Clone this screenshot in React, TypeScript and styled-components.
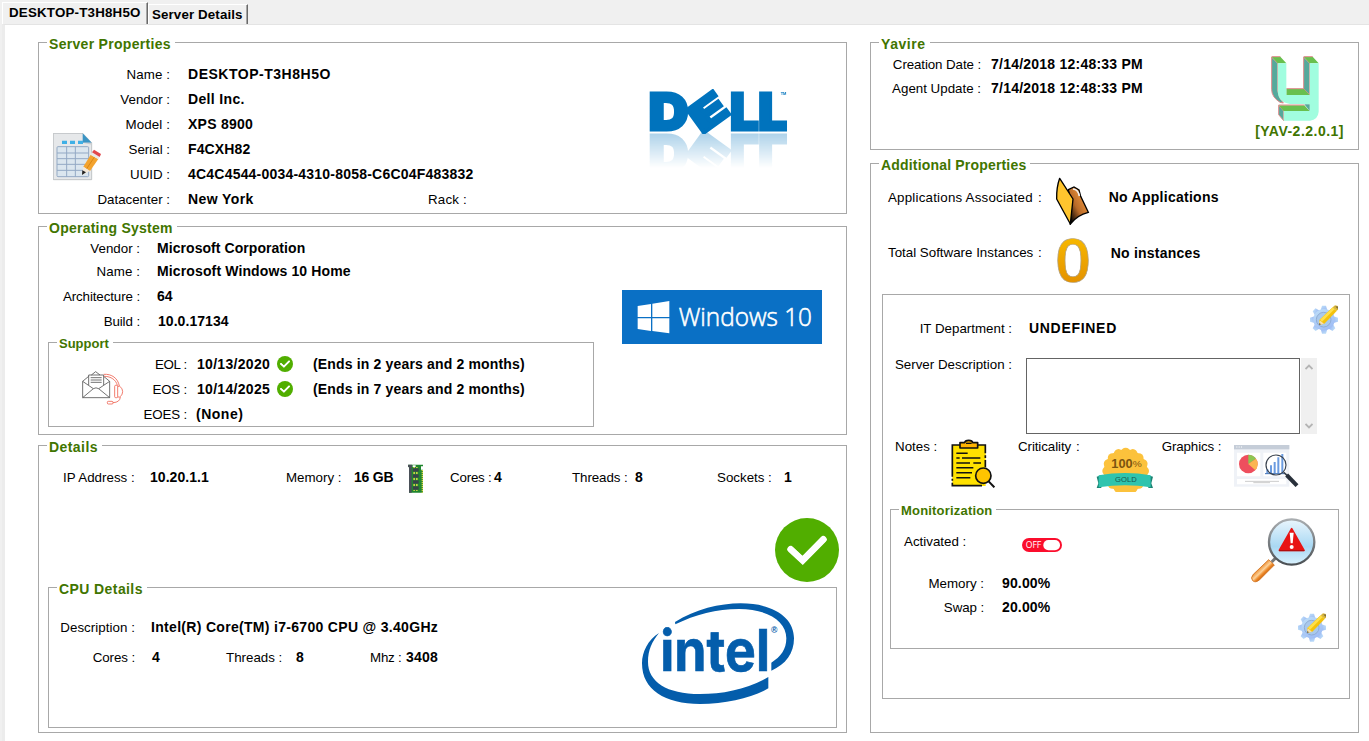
import React from 'react';
import styled, { createGlobalStyle } from 'styled-components';

const GlobalStyle = createGlobalStyle`
  *, *::before, *::after { box-sizing: border-box; }
  body { margin: 0; background: #fff; color: #000; font-family: "Liberation Sans", Arial, sans-serif; overflow: hidden; }
  svg { display: block; }
`;

const Window = styled.div`
  width: 1369px;
  height: 741px;
  display: flex;
  flex-direction: column;
  background: #f0f0f0;
`;

const TabBar = styled.div`
  display: flex;
  align-items: flex-end;
  height: 24px;
  padding-left: 2px;
  background: #f0f0f0;
`;

const Tab = styled.div<{ $active?: boolean; $w: number; $ls: number }>`
  width: ${p => p.$w}px;
  height: ${p => (p.$active ? 22 : 20)}px;
  padding-left: ${p => (p.$active ? 6 : 3)}px;
  border-top: 1px solid #fff;
  border-left: 1px solid #fff;
  border-right: 1px solid #696969;
  box-shadow: inset -1px 0 0 #a5a5a5;
  font-size: 13.33px;
  font-weight: 700;
  line-height: ${p => (p.$active ? 20 : 19)}px;
  letter-spacing: ${p => p.$ls}px;
  white-space: nowrap;
`;

const Page = styled.div`
  flex: 1;
  display: flex;
  gap: 23px;
  margin-left: 2px;
  padding: 17px 0 0 33px;
  border-top: 1px solid #e4e4e4;
  border-left: 3px solid #ececec;
  background: #fff;
`;

const Column = styled.div<{ $w: number; $gap?: number }>`
  display: flex;
  flex-direction: column;
  gap: ${p => p.$gap ?? 0}px;
  width: ${p => p.$w}px;
`;

const Group = styled.section<{ $h: number; $w?: number; $m?: string }>`
  display: flex;
  flex-direction: column;
  flex-shrink: 0;
  width: ${p => (p.$w ? p.$w + 'px' : 'auto')};
  height: ${p => p.$h}px;
  margin: ${p => p.$m ?? '0'};
  border: 1px solid #a8a8a8;
`;

const Legend = styled.h2<{ $ls: number; $size?: number }>`
  align-self: flex-start;
  height: 16px;
  margin: -7px 0 0 8px;
  padding: 0 4px 0 2px;
  background: #fff;
  color: #417500;
  font-size: ${p => p.$size ?? 14}px;
  font-weight: 700;
  line-height: 16px;
  letter-spacing: ${p => p.$ls}px;
  white-space: nowrap;
`;

const Body = styled.div<{ $p?: string; $h?: number }>`
  display: flex;
  align-items: flex-start;
  padding: ${p => p.$p ?? '0'};
  height: ${p => (p.$h ? p.$h + 'px' : 'auto')};
`;

const Fields = styled.div<{ $m?: string }>`
  display: flex;
  flex-direction: column;
  margin: ${p => p.$m ?? '0'};
`;

const Row = styled.div<{ $h?: number; $m?: string }>`
  display: flex;
  align-items: baseline;
  height: ${p => p.$h ?? 25}px;
  margin: ${p => p.$m ?? '0'};
  line-height: 25px;
`;

const Label = styled.span<{ $w?: number; $ls?: number; $end?: boolean; $m?: string }>`
  display: flex;
  flex-shrink: 0;
  justify-content: ${p => (p.$end ? 'flex-end' : 'flex-start')};
  width: ${p => (p.$w ? p.$w + 'px' : 'auto')};
  margin: ${p => p.$m ?? '0'};
  font-size: 13.33px;
  line-height: 25px;
  letter-spacing: ${p => p.$ls ?? 0}px;
  white-space: nowrap;
`;

const Value = styled.strong<{ $w?: number; $ls?: number; $m?: string; $green?: boolean }>`
  display: block;
  flex-shrink: 0;
  width: ${p => (p.$w ? p.$w + 'px' : 'auto')};
  margin: ${p => p.$m ?? '0'};
  color: ${p => (p.$green ? '#417500' : '#000')};
  font-size: 14px;
  font-weight: 700;
  line-height: 25px;
  letter-spacing: ${p => p.$ls ?? 0.2}px;
  white-space: nowrap;
`;

const Art = styled.svg<{ $m?: string }>`
  flex-shrink: 0;
  align-self: flex-start;
  margin: ${p => p.$m ?? '0'};
`;

const Mirrored = styled.div`
  flex-shrink: 0;
  width: 140px;
  height: 45px;
  margin: 37px 57px 0 auto;
  -webkit-box-reflect: below -3px linear-gradient(to bottom, transparent 18%, rgba(0, 0, 0, 0.34) 100%);
`;

const Brand = styled.div`
  display: flex;
  flex-direction: column;
  align-items: center;
  margin: 4px 14px 0 auto;
`;

const DescriptionBox = styled.textarea`
  width: 274px;
  height: 76px;
  margin: 6px 0 0 14px;
  border: 1px solid #646464;
  background: #fff;
  resize: none;
  outline: none;
  overflow: hidden;
`;

const ScrollTrack = styled.div`
  display: flex;
  flex-direction: column;
  justify-content: space-between;
  width: 16px;
  height: 76px;
  margin: 6px 0 0 1px;
  padding: 6px 4px 5px;
  background: #f0f0f0;
`;

const SideIcons = styled.div`
  display: flex;
  flex-direction: column;
  margin-left: auto;
`;

const CheckIcon = ({ size, m }: { size: number; m: string }) => (
  <Art $m={m} width={size} height={size} viewBox="0 0 192 192">
    <circle cx="96" cy="96" r="96" fill="#51ae00" />
    <polyline points="49,95 83,127 144,65" fill="none" stroke="#fff" strokeWidth="17" strokeLinecap="square" />
    <polyline points="47,94 83,127 145,64" fill="none" stroke="#fff" strokeWidth="20" strokeLinecap="round" />
  </Art>
);

const SheetIcon = () => (
  <Art $m="81px 0 0 14px" width="48" height="48" viewBox="159 399 144 144">
    <path d="M160 400H248L275 428V539H160Z" fill="#e6e8ea" stroke="#a9adb0" strokeWidth="2" />
    <path d="M248 400L275 428H248Z" fill="#3a94c4" />
    <path d="M248 428H275V434Z" fill="#c9ccd0" />
    <path d="M186 422h15v10h-15zM210 422h15v10h-15zM234 422h15v10h-15z" fill="#3fb0e6" />
    <rect x="171" y="440" width="95" height="90" rx="3" fill="#dbe6ef" stroke="#93a9c4" strokeWidth="3" />
    <path d="M200 440V530M226 440V530M171 459H266M171 476H266M171 493H266M171 511H266" stroke="#93a9c4" strokeWidth="3" />
    <path d="M272 464L295 477L270 513L250 500Z" fill="#f3a32e" />
    <path d="M284 470L260 506" stroke="#d98613" strokeWidth="3" />
    <path d="M250 500L270 513L246 525Z" fill="#f4e8d8" />
    <path d="M247 511L258 517L246 525Z" fill="#222" />
    <path d="M276 457L299 471L295 478L271 464Z" fill="#e8e8e8" />
    <path d="M282 449L303 462L299 471L276 457Z" fill="#e2474b" />
  </Art>
);

const DellLogo = () => (
  <Mirrored>
    <Art width="140" height="45" viewBox="117 57 420 135">
      <g fill="#0073bd" stroke="#0073bd" strokeWidth="9" fontFamily="Inter, 'Open Sans', sans-serif" fontWeight="900" fontSize="153">
        <text x="116" y="181" textLength="119" lengthAdjust="spacingAndGlyphs">D</text>
        <text x="360" y="181" textLength="86" lengthAdjust="spacingAndGlyphs">L</text>
        <text x="445" y="181" textLength="86" lengthAdjust="spacingAndGlyphs">L</text>
        <g transform="translate(296 125) rotate(-36)">
          <text x="-56" y="44" fontSize="121" textLength="108" lengthAdjust="spacingAndGlyphs">E</text>
        </g>
      </g>
      <text x="512" y="76" fontSize="12" fontWeight="700" fill="#0073bd" fontFamily="Liberation Sans, sans-serif">TM</text>
    </Art>
  </Mirrored>
);

const WindowsLogo = () => (
  <Art $m="54px 24px 0 auto" width="200" height="54" viewBox="66 60 600 162">
    <rect x="66" y="60" width="600" height="162" fill="#0a70c5" />
    <path d="M113 108L153 102V141H113ZM157 101L208 93V141H157ZM113 145H153V183L113 177ZM157 145H208V190L157 183Z" fill="#fff" />
    <text x="236" y="169" fill="#fff" stroke="#fff" strokeWidth="1.8" fontFamily="'Open Sans', 'Noto Sans', sans-serif" fontWeight="300" fontSize="79" textLength="400" lengthAdjust="spacingAndGlyphs">Windows 10</text>
  </Art>
);

const SupportIcon = () => (
  <Art $m="19px 0 0 33px" width="42" height="35" viewBox="156 468 126 105" fill="none">
    <g stroke="#555" strokeWidth="2.5">
      <path d="M158 499V548H239V499M158 499L176 484M239 499L221 484M158 548L190 521Q198 516 206 521L239 548M158 499L190 521M239 499L206 521" />
      <path d="M176 510V480H221V510M184 480L197 470L210 480M182 488H215M182 495H215M182 502H215" />
    </g>
    <g stroke="#ee6352" strokeWidth="2.5">
      <path d="M221 478C245 476 264 490 268 513M223 484C243 484 258 495 262 511" />
      <rect x="254" y="511" width="9" height="37" rx="3" />
      <path d="M263 514H269Q278 519 278 530Q278 541 269 546H263M271 546Q270 562 249 563" />
      <rect x="232" y="559" width="17" height="8" rx="3" />
    </g>
  </Art>
);

const RamIcon = () => (
  <Art $m="-1px 0 0 0" width="16" height="29" viewBox="1134 100 48 87">
    <path d="M1135 102H1179V186H1137V110H1135Z" fill="#20862f" />
    <path d="M1134 102H1146V109H1134ZM1137 102H1145V186H1137Z" fill="#4a5058" />
    <path d="M1148 104h9v5h-9zM1173 107h7v10h-7z" fill="#fff" />
    {[109, 127, 145, 163].map(y => (
      <g key={y}>
        <path d={`M1150 ${y + 2}h16M1150 ${y + 16}h16`} stroke="#e3dc4b" strokeWidth="3" strokeDasharray="5 3" />
        <rect x="1149" y={y + 4} width="17" height="10" fill="#39424a" />
      </g>
    ))}
    <path d="M1177 118V186" stroke="#dfd84a" strokeWidth="4" strokeDasharray="4 2" />
  </Art>
);

const IntelLogo = () => (
  <Art $m="6px 40px 0 auto" width="154" height="101" viewBox="66 279 462 303" fill="#045dab">
    <path d="M117 369C84 390 66 425 66 460C66 540 135 582 240 582C320 581 400 562 445 535V501C385 537 310 552 240 552C140 552 84 515 84 455C84 420 96 395 117 369Z" />
    <path d="M165 336C225 298 300 280 362 280C460 280 522 322 522 385C522 430 497 464 454 482V458C482 441 499 418 499 385C499 332 440 297 357 297C290 297 225 314 166 343Z" />
    <text x="121" y="482" stroke="#045dab" strokeWidth="2" fontFamily="Inter, 'Open Sans', sans-serif" fontWeight="700" fontSize="172" textLength="329" lengthAdjust="spacingAndGlyphs">intel</text>
    <text x="453" y="369" fontFamily="Liberation Sans, sans-serif" fontWeight="700" fontSize="26">®</text>
  </Art>
);

const YavireLogo = () => (
  <Art $m="0 0 0 16px" width="48" height="65" viewBox="1215 77 144 195">
    <path d="M1217 80L1235 99V180Q1238 204 1252 218L1242 216Q1217 200 1217 178Z" fill="#55a99c" stroke="#e08a8c" strokeWidth="3" />
    <path d="M1313 80L1331 99V194L1313 175Z" fill="#55a99c" stroke="#e08a8c" strokeWidth="3" />
    <path d="M1238 225L1253 242V271L1238 253Z" fill="#55a99c" stroke="#e08a8c" strokeWidth="3" />
    <path d="M1217 79H1243L1261 99H1235ZM1313 79H1340L1358 99H1331ZM1261 175H1313L1331 194H1261ZM1238 225H1315L1331 242H1253Z" fill="#68c04e" />
    <path d="M1217 79H1243M1313 79H1340M1261 175H1313M1238 224H1315" stroke="#e08a8c" strokeWidth="3" />
    <path d="M1235 99H1261V194H1331V99H1358V244Q1356 268 1332 271H1253V242H1331V221H1272Q1235 216 1235 180Z" fill="#a1fddf" />
    <path d="M1315 222H1331V242Z" fill="#55a99c" />
  </Art>
);

const FolderIcon = () => (
  <Art $m="4px 0 0 13px" width="35" height="48" viewBox="558 66 105 144">
    <defs>
      <linearGradient id="folderBack" x1="0.7" y1="0.3" x2="0.1" y2="0.9">
        <stop offset="0" stopColor="#e08a38" />
        <stop offset="0.45" stopColor="#b86a28" />
        <stop offset="1" stopColor="#000" />
      </linearGradient>
    </defs>
    <path d="M598 104L615 96L630 105L635 124L658 172Q625 180 604 207L606 140Z" fill="url(#folderBack)" stroke="#000" strokeWidth="4" />
    <path d="M612 102Q628 104 631 123" fill="none" stroke="#f2f2f2" strokeWidth="5" />
    <path d="M572 70L612 132L604 207L563 132Q562 98 572 70Z" fill="#ffc52e" stroke="#000" strokeWidth="4" strokeLinejoin="round" />
  </Art>
);

const ZeroIcon = () => (
  <Art $m="1px 0 0 14px" width="34" height="48" viewBox="561 243 102 144">
    <defs>
      <linearGradient id="zeroFill" x1="0" y1="0" x2="0" y2="1">
        <stop offset="0.1" stopColor="#fcc200" />
        <stop offset="0.9" stopColor="#e08a00" />
      </linearGradient>
    </defs>
    <text x="558" y="381" fontFamily="'Open Sans', sans-serif" fontWeight="600" fontSize="181" textLength="108" lengthAdjust="spacingAndGlyphs" fill="url(#zeroFill)" stroke="#b0a080" strokeWidth="2">0</text>
  </Art>
);

const GearPencil = ({ m }: { m: string }) => (
  <Art $m={m} width="28" height="29" viewBox="0 0 84 87">
    <defs>
      <linearGradient id="gearFill" x1="0" y1="0" x2="0.6" y2="1">
        <stop offset="0" stopColor="#bfe0f8" />
        <stop offset="1" stopColor="#9fbdf5" />
      </linearGradient>
    </defs>
    <g fill="url(#gearFill)">
      {[0, 45, 90, 135, 180, 225, 270, 315].map(a => (
        <path key={a} d="M32 16L36 2H48L52 16Z" transform={`rotate(${a} 42 44)`} />
      ))}
      <circle cx="42" cy="44" r="32" />
    </g>
    <circle cx="41" cy="44" r="22" fill="#a9c9ec" stroke="#8aa6cf" strokeWidth="2.5" />
    <path d="M28 45L68 7L80 18L43 56L27 60Z" fill="#f4c20c" />
    <path d="M30 44L69 7L74 12L36 50Z" fill="#ffe04a" />
    <path d="M29 46L42 56L27 60Z" fill="#f6dfae" />
    <path d="M28 54L33 58L27 60Z" fill="#555" />
    <path d="M68 7L75 1L84 3L85 12L80 18Z" fill="#d9b63a" />
    <path d="M76 4L84 5L83 12Z" fill="#6d6040" />
  </Art>
);

const NotesIcon = () => (
  <Art $m="5px 0 0 15px" width="44" height="50" viewBox="213 27 132 150">
    <path d="M217 45H317V168H217Z" fill="#ffe100" />
    <path d="M240 45H217V140M217 146V152M217 158V167H306M294 45H316V70M316 76V84M316 90V112" fill="none" stroke="#111" strokeWidth="5" />
    <path d="M240 54V38H254Q255 31 266 31Q277 31 278 38H293V54Z" fill="#ffb400" stroke="#111" strokeWidth="5" strokeLinejoin="round" />
    <path d="M258 40H275" stroke="#111" strokeWidth="4" />
    <path d="M229 70H263M229 84H239M246 84H301M229 99H270M280 99H303M229 113H280M229 128H276M229 143H271" stroke="#111" strokeWidth="4.5" />
    <circle cx="310" cy="137" r="23" fill="#ffc400" stroke="#111" strokeWidth="5" />
    <path d="M326 154L343 172" stroke="#111" strokeWidth="6" />
  </Art>
);

const BadgeIcon = () => (
  <Art $m="13px 0 0 16px" width="57" height="45" viewBox="648 51 171 135">
    <g fill="#fcc23c">
      <circle cx="737" cy="123" r="65" />
      {Array.from({ length: 16 }, (_, i) => (
        <circle key={i} cx="737" cy="67" r="14" transform={`rotate(${i * 22.5} 737 123)`} />
      ))}
    </g>
    <path d="M650 140L664 136V174H650L655 160ZM819 140L805 136V174H819L814 160Z" fill="#1c8272" />
    <path d="M656 136Q736 122 812 136V172Q736 160 656 172Z" fill="#2fc4ae" />
    <text x="694" y="114" fontFamily="Liberation Sans, sans-serif" fontWeight="700" fontSize="36" fill="#7b5410" textLength="64" lengthAdjust="spacingAndGlyphs">100</text>
    <text x="758" y="112" fontFamily="Liberation Sans, sans-serif" fontSize="26" fill="#7b5410" textLength="27" lengthAdjust="spacingAndGlyphs">%</text>
    <text x="705" y="155" fontFamily="Liberation Sans, sans-serif" fontSize="20" fill="#17564d" textLength="65" lengthAdjust="spacingAndGlyphs">GOLD</text>
  </Art>
);

const GraphicsIcon = () => (
  <Art $m="10px 0 0 11px" width="65" height="43" viewBox="1062 42 195 129">
    <rect x="1062" y="45" width="166" height="125" fill="#eff2f7" />
    <rect x="1062" y="45" width="166" height="13" fill="#c5cdd8" />
    <path d="M1069 51H1086" stroke="#fff" strokeWidth="3" strokeDasharray="3 4" />
    <path d="M1071 68H1141V139H1071ZM1150 68H1219V139H1150ZM1071 147H1219V163H1071Z" fill="#fff" />
    <path d="M1095 154H1197M1120 158H1170" stroke="#ccc" strokeWidth="3" />
    <circle cx="1105" cy="102" r="28" fill="#ee4f5e" />
    <path d="M1105 102V74A28 28 0 0 1 1128 86Z" fill="#8dc653" />
    <path d="M1105 102L1128 86A28 28 0 0 1 1126 121Z" fill="#fbb652" />
    <path d="M1162 130V118M1173 130V106M1184 130V96M1195 130V82M1207 130V72" stroke="#6a9be0" strokeWidth="6" />
    <path d="M1155 131H1213" stroke="#3d6fb5" strokeWidth="3" />
    <circle cx="1188" cy="105" r="30" fill="none" stroke="#39424e" strokeWidth="3.5" />
    <path d="M1211 127L1222 137" stroke="#39424e" strokeWidth="5" />
    <path d="M1220 135L1251 167" stroke="#28303a" strokeWidth="12" />
  </Art>
);

const OffSwitch = () => (
  <Art $m="9px 0 0 57px" width="40" height="14" viewBox="0 0 120 42">
    <rect width="120" height="42" rx="21" fill="#fb0d2c" />
    <rect x="64" y="6" width="50" height="31" rx="15" fill="#fff" />
    <text x="11" y="30" fontFamily="'Open Sans', sans-serif" fontSize="25" fill="#fff" textLength="47" lengthAdjust="spacingAndGlyphs">OFF</text>
  </Art>
);

const AlertLens = () => (
  <Art $m="-1px 22px 0 0" width="65" height="65" viewBox="1114 54 195 195">
    <defs>
      <linearGradient id="lensGlass" x1="0" y1="0" x2="0" y2="1">
        <stop offset="0" stopColor="#eaf6fd" />
        <stop offset="0.6" stopColor="#a9d8f3" />
        <stop offset="1" stopColor="#d9f1fd" />
      </linearGradient>
      <linearGradient id="lensRim" x1="0" y1="0" x2="0" y2="1">
        <stop offset="0" stopColor="#a9adb0" />
        <stop offset="1" stopColor="#4b5054" />
      </linearGradient>
      <linearGradient id="handle" x1="0.35" y1="0.35" x2="0.65" y2="0.65">
        <stop offset="0" stopColor="#ee8a2a" />
        <stop offset="0.45" stopColor="#fcd29a" />
        <stop offset="0.7" stopColor="#ee8a2a" />
        <stop offset="1" stopColor="#c85f0c" />
      </linearGradient>
    </defs>
    <path d="M1192 170L1176 186" stroke="#777" strokeWidth="9" />
    <path d="M1167 179L1184 195L1140 239Q1128 250 1119 242Q1111 234 1121 223Z" fill="url(#handle)" stroke="#d0701a" strokeWidth="2.5" />
    <circle cx="1236" cy="126" r="68" fill="url(#lensGlass)" stroke="url(#lensRim)" strokeWidth="7" />
    <path d="M1236 86L1273 151H1199Z" fill="#e81414" stroke="#e81414" strokeWidth="5" strokeLinejoin="round" />
    <path d="M1198 152H1274" stroke="#a80d0d" strokeWidth="3" />
    <path d="M1230 98H1242L1239 130H1233Z" fill="#fff" />
    <circle cx="1236" cy="141" r="6" fill="#fff" />
  </Art>
);

const Chevron = ({ down }: { down?: boolean }) => (
  <Art width="8" height="6" viewBox="0 0 8 6">
    <path d={down ? 'M0.5 1L4 4.5L7.5 1' : 'M0.5 5L4 1.5L7.5 5'} fill="none" stroke="#b4b4b4" strokeWidth="1.8" />
  </Art>
);

export default function App() {
  return (
    <Window>
      <GlobalStyle />
      <TabBar>
        <Tab $active $w={146} $ls={0.2}>DESKTOP-T3H8H5O</Tab>
        <Tab $w={100} $ls={0.12}>Server Details</Tab>
      </TabBar>
      <Page>
        <Column $w={809}>
          <Group $h={172}>
            <Legend $ls={0.3}>Server Properties</Legend>
            <Body>
              <SheetIcon />
              <Fields $m="10px 0 0 0">
                <Row><Label $w={69} $end $ls={0.1}>Name :</Label><Value $m="0 0 0 18px" $ls={0.52}>DESKTOP-T3H8H5O</Value></Row>
                <Row><Label $w={69} $end>Vendor :</Label><Value $m="0 0 0 18px" $ls={0.34}>Dell Inc.</Value></Row>
                <Row><Label $w={69} $end $ls={0.1}>Model :</Label><Value $m="0 0 0 18px" $ls={0.25}>XPS 8900</Value></Row>
                <Row><Label $w={69} $end>Serial :</Label><Value $m="0 0 0 18px" $ls={0.14}>F4CXH82</Value></Row>
                <Row><Label $w={69} $end>UUID :</Label><Value $m="0 0 0 18px" $ls={0.21}>4C4C4544-0034-4310-8058-C6C04F483832</Value></Row>
                <Row>
                  <Label $w={69} $end>Datacenter :</Label><Value $m="0 0 0 18px" $w={240} $ls={0.4}>New York</Value>
                  <Label $ls={0.19}>Rack :</Label>
                </Row>
              </Fields>
              <DellLogo />
            </Body>
          </Group>

          <Group $h={209} $m="12px 0 0 0">
            <Legend $ls={0.24}>Operating System</Legend>
            <Body $h={98}>
              <Fields>
                <Row $h={23}><Label $w={101} $end>Vendor :</Label><Value $m="0 0 0 17px" $ls={0.06}>Microsoft Corporation</Value></Row>
                <Row><Label $w={101} $end $ls={0.1}>Name :</Label><Value $m="0 0 0 17px" $ls={0.13}>Microsoft Windows 10 Home</Value></Row>
                <Row><Label $w={101} $end $ls={-0.1}>Architecture :</Label><Value $m="0 0 0 17px" $ls={0}>64</Value></Row>
                <Row><Label $w={101} $end $ls={-0.1}>Build :</Label><Value $m="0 0 0 18px" $ls={0.05}>10.0.17134</Value></Row>
              </Fields>
              <WindowsLogo />
            </Body>
            <Group $w={546} $h={85} $m="8px 0 0 9px">
              <Legend $size={13} $ls={0}>Support</Legend>
              <Body>
                <SupportIcon />
                <Fields $m="0">
                  <Row><Label $w={63} $end $ls={-0.3}>EOL :</Label><Value $m="0 0 0 10px" $w={80} $ls={0.3}>10/13/2020</Value><CheckIcon size={16} m="4px 20px 0 0" /><Value $ls={0.16}>(Ends in 2 years and 2 months)</Value></Row>
                  <Row><Label $w={63} $end $ls={-0.2}>EOS :</Label><Value $m="0 0 0 10px" $w={80} $ls={0.3}>10/14/2025</Value><CheckIcon size={16} m="4px 20px 0 0" /><Value $ls={0.16}>(Ends in 7 years and 2 months)</Value></Row>
                  <Row><Label $w={63} $end $ls={-0.15}>EOES :</Label><Value $m="0 0 0 9px" $ls={0.5}>(None)</Value></Row>
                </Fields>
              </Body>
            </Group>
          </Group>

          <Group $h={288} $m="10px 0 0 0">
            <Legend $ls={0.43}>Details</Legend>
            <Body $p="10px 0 0 24px" $h={63}>
              <Label $w={87}>IP Address :</Label><Value $w={136} $ls={0.05}>10.20.1.1</Value>
              <Label $w={68}>Memory :</Label><Value $w={54} $ls={-0.2}>16 GB</Value><RamIcon />
              <Label $m="0 0 0 26px" $w={44} $ls={-0.2}>Cores :</Label><Value $w={78}>4</Value>
              <Label $w={63} $ls={-0.07}>Threads :</Label><Value $w={82}>8</Value>
              <Label $w={67}>Sockets :</Label><Value>1</Value>
            </Body>
            <Body><CheckIcon size={64} m="0 7px 5px auto" /></Body>
            <Group $w={789} $h={141} $m="0 0 0 9px">
              <Legend $ls={0.41}>CPU Details</Legend>
              <Body>
                <Fields $m="18px 0 0 0">
                  <Row $h={30}><Label $w={86} $end $ls={0.05}>Description :</Label><Value $m="0 0 0 16px" $ls={0.31}>Intel(R) Core(TM) i7-6700 CPU @ 3.40GHz</Value></Row>
                  <Row>
                    <Label $w={86} $end $ls={-0.1}>Cores :</Label><Value $m="0 0 0 17px" $w={74}>4</Value>
                    <Label $w={70}>Threads :</Label><Value $w={74}>8</Value>
                    <Label $w={36} $ls={-0.2}>Mhz :</Label><Value>3408</Value>
                  </Row>
                </Fields>
                <IntelLogo />
              </Body>
            </Group>
          </Group>
        </Column>

        <Column $w={489} $gap={13}>
          <Group $h={108}>
            <Legend $ls={0.56}>Yavire</Legend>
            <Body>
              <Fields>
                <Row $h={24}><Label $w={110} $end $ls={-0.1}>Creation Date :</Label><Value $m="0 0 0 10px" $ls={0.23}>7/14/2018 12:48:33 PM</Value></Row>
                <Row><Label $w={110} $end>Agent Update :</Label><Value $m="0 0 0 10px" $ls={0.23}>7/14/2018 12:48:33 PM</Value></Row>
              </Fields>
              <Brand>
                <YavireLogo />
                <Value $green $ls={0.49} $m="-2px 0 0 0">[YAV-2.2.0.1]</Value>
              </Brand>
            </Body>
          </Group>

          <Group $h={570}>
            <Legend $ls={0.18}>Additional Properties</Legend>
            <Body $h={62} $p="0 0 0 17px">
              <Label $m="12px 0 0 0" $w={150} $ls={0.21}>Applications Associated</Label><Label $m="12px 0 0 0">:</Label>
              <FolderIcon />
              <Value $m="12px 0 0 19px" $ls={0.27}>No Applications</Value>
            </Body>
            <Body $h={59} $p="0 0 0 17px">
              <Label $m="5px 0 0 0" $w={150}>Total Software Instances</Label><Label $m="5px 0 0 0">:</Label>
              <ZeroIcon />
              <Value $m="6px 0 0 21px" $ls={0.23}>No instances</Value>
            </Body>
            <Group $w={468} $h={405} $m="0 0 0 11px">
              <Body $h={57}>
                <Label $m="21px 0 0 0" $w={129} $end>IT Department :</Label>
                <Value $m="21px 0 0 17px" $ls={0.7}>UNDEFINED</Value>
                <GearPencil m="10px 11px 0 auto" />
              </Body>
              <Body $h={82}>
                <Label $w={129} $end>Server Description :</Label>
                <DescriptionBox readOnly />
                <ScrollTrack><Chevron /><Chevron down /></ScrollTrack>
              </Body>
              <Body $h={75} $p="0 0 0 12px">
                <Label $w={41}>Notes :</Label><NotesIcon />
                <Label $m="0 0 0 23px" $w={58} $ls={-0.09}>Criticality</Label><Label>:</Label><BadgeIcon />
                <Label $m="0 0 0 9px" $w={61} $ls={-0.12}>Graphics :</Label><GraphicsIcon />
              </Body>
              <Group $w={449} $h={140} $m="0 0 0 7px">
                <Legend $size={13} $ls={0.19}>Monitorization</Legend>
                <Body>
                  <Fields $m="10px 0 0 0">
                    <Body $h={42}><Label $m="0 0 0 13px" $w={61}>Activated :</Label><OffSwitch /></Body>
                    <Row $h={24}><Label $w={93} $end>Memory :</Label><Value $m="0 0 0 18px" $ls={0.15}>90.00%</Value></Row>
                    <Row><Label $w={93} $end $ls={-0.1}>Swap :</Label><Value $m="0 0 0 18px" $ls={0.15}>20.00%</Value></Row>
                  </Fields>
                  <SideIcons>
                    <AlertLens />
                    <GearPencil m="30px 12px 0 auto" />
                  </SideIcons>
                </Body>
              </Group>
            </Group>
          </Group>
        </Column>
      </Page>
    </Window>
  );
}
